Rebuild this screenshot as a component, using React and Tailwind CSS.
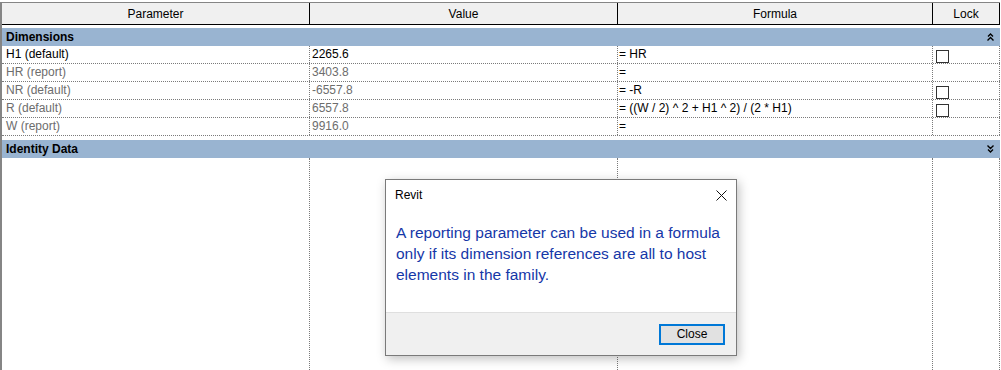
import React from 'react'

const rows = [
  { name: 'H1 (default)', value: '2265.6', formula: '= HR', lock: true, dim: false },
  { name: 'HR (report)', value: '3403.8', formula: '=', lock: false, dim: true },
  { name: 'NR (default)', value: '-6557.8', formula: '= -R', lock: true, dim: true },
  { name: 'R (default)', value: '6557.8', formula: '= ((W / 2) ^ 2 + H1 ^ 2) / (2 * H1)', lock: true, dim: true },
  { name: 'W (report)', value: '9916.0', formula: '=', lock: false, dim: true },
]

const cols = 'grid grid-cols-[308px_308px_315px_67px]'

// little double chevrons on the group bands
const Collapse = ({ up }) => (
  <svg width="7" height="8" viewBox="0 0 7 8" className="block">
    {up ? (
      <path d="M1 3.5 L3.5 1 L6 3.5 M0.5 7.5 L3.5 4.5 L6.5 7.5" stroke="#000" strokeWidth="1.4" fill="none" />
    ) : (
      <path d="M0.5 0.5 L3.5 3.5 L6.5 0.5 M1 4.5 L3.5 7 L6 4.5" stroke="#000" strokeWidth="1.4" fill="none" />
    )}
  </svg>
)

const Band = ({ title, up, className }) => (
  <div className={'h-[18px] bg-[#99b4d1] flex items-center justify-between pl-[4px] pr-[6px] font-bold ' + className}>
    <span className="leading-[18px]">{title}</span>
    <Collapse up={up} />
  </div>
)

const App = () => {
  return (
    <div className="w-[1001px] h-[370px] bg-white relative overflow-hidden font-['Liberation_Sans',Arial,sans-serif] text-[12px] text-black">
      <div className="h-full pt-[2px] flex flex-col">
        <div className="flex-1 w-[1000px] flex flex-col border-l-2 border-t border-[#858585]">
          {/* column headers */}
          <div className={cols + ' h-[22px] bg-[#f0f0f0] border-b border-black'}>
            {['Parameter', 'Value', 'Formula', 'Lock'].map(h => (
              <div key={h} className="border-r border-black flex items-center justify-center leading-none">
                {h}
              </div>
            ))}
          </div>

          <Band title="Dimensions" up className="mt-[3px]" />

          {rows.map(r => (
            <div key={r.name} className={cols + ' h-[18px] border-b border-dotted border-[#7a7a7a]'}>
              <div className={'border-r border-dotted border-[#7a7a7a] pl-[4px] leading-[17px] ' + (r.dim ? 'text-[#6d6d6d]' : '')}>
                {r.name}
              </div>
              <div className={'border-r border-dotted border-[#7a7a7a] pl-[2px] leading-[17px] ' + (r.dim ? 'text-[#6d6d6d]' : '')}>
                {r.value}
              </div>
              <div className="border-r border-dotted border-[#7a7a7a] pl-[1px] leading-[17px] whitespace-nowrap">
                {r.formula}
              </div>
              <div className="border-r border-dotted border-[#7a7a7a] pl-[3px] pt-[4px]">
                {r.lock && <div className="w-[13px] h-[13px] border border-[#333]" />}
              </div>
            </div>
          ))}

          <Band title="Identity Data" className="mt-[4px]" />

          <div className={cols + ' flex-1'}>
            <div className="border-r border-dotted border-[#7a7a7a]" />
            <div className="border-r border-dotted border-[#7a7a7a]" />
            <div className="border-r border-dotted border-[#7a7a7a]" />
            <div className="border-r border-dotted border-[#7a7a7a]" />
          </div>
        </div>
      </div>

      {/* message box */}
      <div className="absolute left-[385px] top-[179px] w-[352px] h-[177px] border border-[#7a7a7a] bg-white flex flex-col shadow-[2px_3px_10px_rgba(0,0,0,0.25)]">
        <div className="flex-1 flex flex-col">
          <div className="h-[30px] flex items-center justify-between pl-[9px] pr-[9px]">
            <span className="leading-none">Revit</span>
            <svg width="11" height="11" viewBox="0 0 11 11" className="block">
              <path d="M0.5 0.5 L10.5 10.5 M10.5 0.5 L0.5 10.5" stroke="#111" strokeWidth="1" fill="none" />
            </svg>
          </div>
          <div className="pl-[10px] pt-[12px] text-[15.5px] leading-[21px] text-[#1537a8] whitespace-nowrap">
            A reporting parameter can be used in a formula<br />
            only if its dimension references are all to host<br />
            elements in the family.
          </div>
        </div>
        <div className="h-[43px] bg-[#f0f0f0] border-t border-[#dfdfdf] flex items-center justify-end pr-[11px]">
          <button className="w-[66px] h-[21px] bg-[#e1e1e1] border-2 border-[#0078d7] flex items-center justify-center leading-none">
            Close
          </button>
        </div>
      </div>
    </div>
  )
}

export default App
